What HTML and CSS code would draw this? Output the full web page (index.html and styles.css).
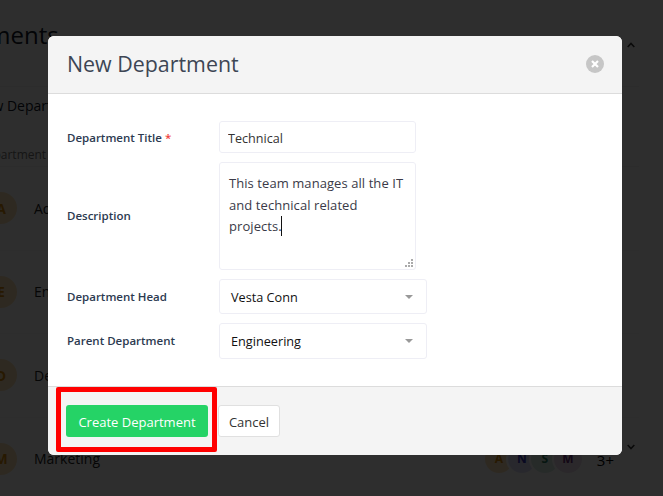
FILE: index.html
```html
<!DOCTYPE html>
<html lang="en">
<head>
<meta charset="utf-8">
<title>New Department</title>
<link rel="stylesheet" href="styles.css">
</head>
<body>
<div class="page">
  <h1 class="page-title">Departments</h1>
  <div class="toolbar"><span class="new-link">New Department</span></div>
  <div class="table-head">Department</div>
  <div class="row"><span class="avatar av-orange">A</span><span class="row-name">Administration</span></div>
  <div class="row"><span class="avatar av-orange">E</span><span class="row-name">Engineering</span></div>
  <div class="row"><span class="avatar av-orange">D</span><span class="row-name">Design</span></div>
  <div class="row"><span class="avatar av-orange">M</span><span class="row-name">Marketing</span>
    <div class="stack">
      <span class="mini av-orange">A</span><span class="mini av-blue">N</span><span class="mini av-green">S</span><span class="mini av-purple">M</span>
      <span class="more">3+</span>
    </div>
  </div>
</div>
<div class="scrollbar">
  <svg class="chev" width="8" height="6" viewBox="0 0 8 6"><path d="M.7 5L4 1.5 7.3 5" fill="none" stroke="#333" stroke-width="1.6"/></svg>
  <svg class="chev" width="8" height="6" viewBox="0 0 8 6"><path d="M.7 1L4 4.5 7.3 1" fill="none" stroke="#333" stroke-width="1.6"/></svg>
</div>
<div class="overlay">
  <div class="modal">
    <header class="modal-header">
      <h2 class="modal-title">New Department</h2>
      <button class="close" aria-label="Close">
        <svg width="18" height="18" viewBox="0 0 18 18"><circle cx="9" cy="9" r="9" fill="#c6c6c6"/><path d="M6 6l6 6M12 6l-6 6" stroke="#fff" stroke-width="2.2"/></svg>
      </button>
    </header>
    <div class="modal-body">
      <div class="field field-title">
        <label class="label">Department Title <span class="req">*</span></label>
        <input class="input" type="text" value="Technical">
      </div>
      <div class="field">
        <label class="label">Description</label>
        <div class="textarea">This team manages all the IT and technical related projects.<span class="caret"></span>
          <svg class="grip" width="9" height="9" viewBox="0 0 9 9"><path d="M7 0h2v2H7zM4 3h2v2H4zM7 3h2v2H7zM1 6h2v2H1zM4 6h2v2H4zM7 6h2v2H7z" fill="#aaa"/></svg>
        </div>
      </div>
      <div class="field">
        <label class="label">Department Head</label>
        <div class="select select-head"><span>Vesta Conn</span><svg width="8" height="4" viewBox="0 0 8 4"><path d="M0 0h8L4 4z" fill="#999"/></svg></div>
      </div>
      <div class="field">
        <label class="label">Parent Department</label>
        <div class="select select-parent"><span>Engineering</span><svg width="8" height="4" viewBox="0 0 8 4"><path d="M0 0h8L4 4z" fill="#999"/></svg></div>
      </div>
    </div>
    <footer class="modal-footer">
      <button class="btn btn-primary">Create Department</button>
      <button class="btn btn-cancel">Cancel</button>
    </footer>
    <div class="highlight"></div>
  </div>
</div>
</body>
</html>
```
FILE: styles.css
```css
* { box-sizing: border-box; }
html, body { margin: 0; height: 100%; }
body {
  width: 663px;
  height: 496px;
  overflow: hidden;
  position: relative;
  background: #fff;
  font-family: "Open Sans", "Noto Sans", sans-serif;
  color: #1f2a3a;
}

/* page behind the dialog */
.page { margin-left: -89px; width: 728px; height: 496px; overflow: hidden; }
.page-title { margin: 0; padding-top: 17px; height: 86px; font-size: 24px; font-weight: 400; line-height: 36px; color: #111827; }
.toolbar { height: 34px; padding: 9px 0 0 63px; border-top: 1px solid #f4f4f4; font-size: 14px; line-height: 20px; }
.new-link { color: #111827; }
.table-head { height: 47px; padding: 26px 0 0 67px; border-bottom: 1px solid #f4f4f4; font-size: 12px; color: #777; line-height: 18px; }
.row { display: flex; align-items: center; height: 83.5px; position: relative; border-bottom: 1px solid #f6f6f6; padding-left: 74px; gap: 17px; font-size: 14px; }
.row-name { color: #222; }
.avatar { width: 32px; height: 32px; border-radius: 50%; display: flex; align-items: center; justify-content: center; font-weight: 700; font-size: 14px; }
.av-orange { background: #ffe3b8; color: #d98a0a; }
.av-blue { background: #dfdff7; color: #3434b8; }
.av-green { background: #d8ece4; color: #23785c; }
.av-purple { background: #ecdeeb; color: #6a2f7a; }
.stack { display: flex; align-items: center; margin-left: auto; }
.mini { width: 28px; height: 28px; border-radius: 50%; display: flex; align-items: center; justify-content: center; font-size: 12px; font-weight: 700; margin-right: -5px; box-shadow: 0 0 0 2px #fff; }
.more { margin: 3px 25px 0 20px; font-size: 15px; color: #000; }

.scrollbar { position: absolute; left: 627px; top: 42px; height: 408px; width: 8px; display: flex; flex-direction: column; justify-content: space-between; }
.chev { display: block; }

/* dialog */
.overlay { position: absolute; inset: 0; background: rgba(0, 0, 0, .82); padding: 36px 41px 41px 48px; }
.modal { position: relative; height: 419px; border-radius: 6px; background: #fff; display: flex; flex-direction: column; overflow: hidden; }
.modal-header { height: 58px; flex: none; display: flex; align-items: center; justify-content: space-between; padding: 0 18px 2px 19px; background: #f4f4f4; border-bottom: 1px solid #dcdcdc; }
.modal-title { margin: 0; font-size: 21.4px; line-height: 30px; font-weight: 400; color: #3d4654; }
.close { padding: 0; border: 0; background: none; display: block; width: 18px; height: 18px; }
.close svg { display: block; }
.modal-body { flex: 1; padding: 27px 18px 0 19px; display: flex; flex-direction: column; gap: 9px; }
.field { display: flex; align-items: center; }
.label { width: 152px; flex: none; font-size: 11.5px; font-weight: 600; color: #2c3a50; line-height: 18px; }
.field-title .label { padding-top: 2px; }
.req { color: #f0433c; }
.input, .textarea, .select { border: 1px solid #eeeef5; border-radius: 3px; background: #fff; font-family: inherit; color: #333; }
.input { width: 197px; height: 32px; padding: 2px 8px 0; font-size: 12.6px; outline: 0; }
.textarea { position: relative; width: 197px; height: 108px; padding: 10px 9px 0; font-size: 13px; line-height: 21.7px; letter-spacing: .07px; color: #3a3a48; }
.caret { display: inline-block; width: 1px; height: 20px; margin-left: -1px; background: #111; vertical-align: -5px; }
.grip { position: absolute; right: 2px; bottom: 1px; display: block; }
.select { width: 208px; display: flex; align-items: center; justify-content: space-between; padding: 0 13px 0 11px; font-size: 12.7px; color: #111; }
.select-head { height: 35px; }
.select-parent { height: 36px; }
.modal-footer { height: 69px; flex: none; display: flex; align-items: center; gap: 10px; padding: 0 18px; background: #f4f4f4; border-top: 1px solid #dcdcdc; }
.btn { height: 32px; border-radius: 3px; font-family: inherit; font-size: 13px; padding: 1px 0 0; }
.btn-primary { width: 142px; border: 0; background: #25d366; color: #fff; }
.btn-cancel { width: 62px; border: 1px solid #e0e0e0; background: #fff; color: #333; }
.highlight { position: absolute; left: 8px; top: 351px; width: 161px; height: 65px; border: 5px solid #ff0000; border-radius: 2px; }
```
